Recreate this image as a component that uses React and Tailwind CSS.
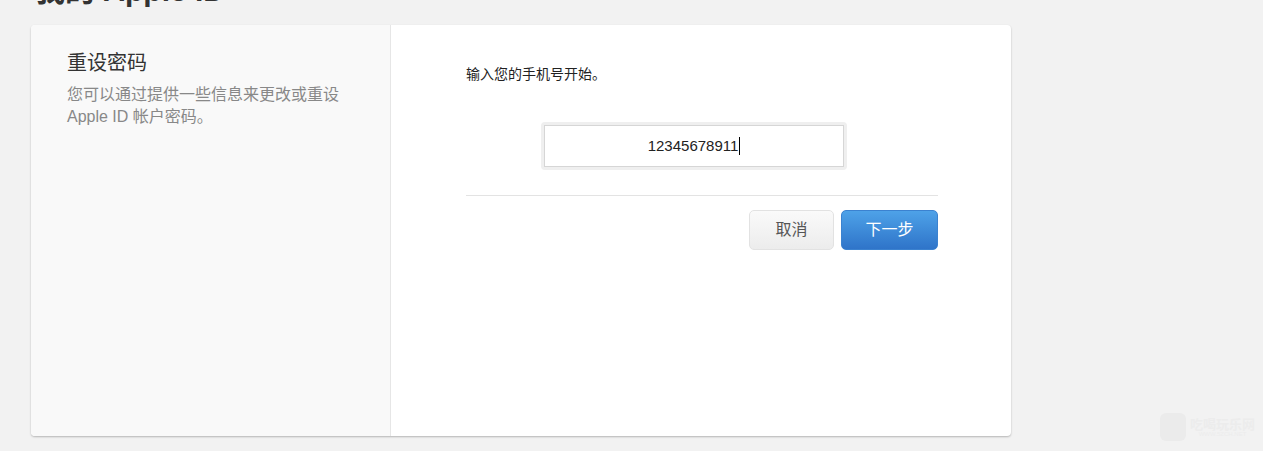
export default function App() {
  return (
    <div className="relative h-[451px] w-[1263px] overflow-hidden bg-[#f2f2f2]" style={{ fontFamily: '"Liberation Sans", Arial, "Noto Sans CJK SC", sans-serif' }}>
      <div className="h-[25px] overflow-hidden pl-[35px]">
        <div className="-mt-[27px] text-[30px] font-bold leading-[36px] text-[#333]">我的 Apple ID</div>
      </div>
      <div className="ml-[31px] flex h-[411px] w-[980px] overflow-hidden rounded-[4px] bg-white shadow-[0_1px_2px_rgba(0,0,0,0.25)]">
        <div className="w-[360px] shrink-0 border-r border-[#e6e6e6] bg-[#f9f9f9] pl-[36px] pt-[23px]">
          <div className="text-[20px] leading-[30px] text-[#333]">重设密码</div>
          <div className="mt-[6px] w-[290px] text-[16px] leading-[22px] text-[#888]">您可以通过提供一些信息来更改或重设 Apple ID 帐户密码。</div>
        </div>
        <div className="flex-1 pl-[75px] pt-[39px]">
          <div className="w-[472px]">
            <div className="text-[14px] leading-[20px] text-[#222]">输入您的手机号开始。</div>
            <div className="ml-[75px] mt-[38px] w-[306px] rounded-[4px] bg-[#efefef] p-[3px]">
              <div className="flex h-[42px] items-center justify-center border border-[#d6d6d6] bg-white text-[15px] text-[#222]">
                <span>12345678911</span>
                <span className="ml-[1px] inline-block h-[18px] w-[1px] bg-black"></span>
              </div>
            </div>
            <div className="mt-[25px] h-[1px] bg-[#e3e3e3]"></div>
            <div className="mt-[14px] flex justify-end gap-[7px]">
              <div className="flex h-[40px] w-[85px] items-center justify-center rounded-[5px] border border-[#e2e2e2] bg-gradient-to-b from-[#fafafa] to-[#ececec] text-[16px] text-[#555]">取消</div>
              <div className="flex h-[40px] w-[97px] items-center justify-center rounded-[5px] border border-[#3b82d0] bg-gradient-to-b from-[#4ea2e8] to-[#2f74c9] text-[16px] text-white">下一步</div>
            </div>
          </div>
        </div>
      </div>
      <div className="absolute bottom-[10px] right-[8px] flex items-center gap-[4px] text-[#ececec]">
        <div className="h-[28px] w-[26px] rounded-[6px] bg-[#ebebeb]"></div>
        <div className="flex flex-col items-center leading-none">
          <span className="text-[13px] font-bold">吃喝玩乐网</span>
          <span className="text-[6px]">WWW.5ZCH.NET</span>
        </div>
      </div>
    </div>
  );
}
